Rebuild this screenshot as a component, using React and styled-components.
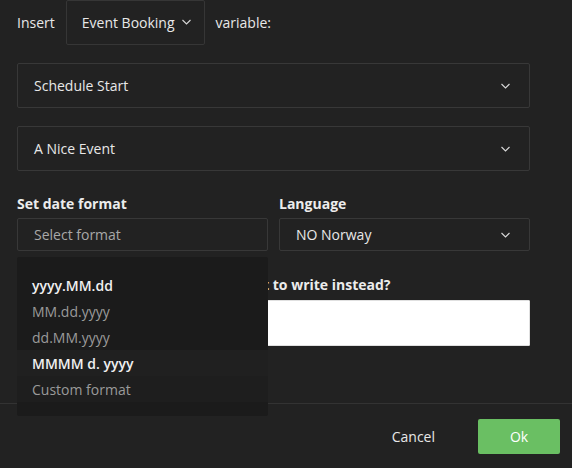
import React from "react";
import styled, { createGlobalStyle } from "styled-components";

const GlobalStyle = createGlobalStyle`
  html, body {
    margin: 0;
    padding: 0;
    background: #222222;
  }
  body {
    font-family: "Open Sans", "Noto Sans", sans-serif;
    color: #e8e8e8;
  }
`;

const Dialog = styled.div`
  width: 572px;
  height: 468px;
  display: flex;
  flex-direction: column;
  background: #222222;
  overflow: hidden;
`;

const Body = styled.div`
  flex: 1;
  padding: 0 42px 0 17px;
  display: flex;
  flex-direction: column;
`;

const InsertRow = styled.div`
  display: flex;
  align-items: center;
  height: 45px;
  font-size: 14px;
  gap: 11px;
`;

const InlineButton = styled.div`
  height: 45px;
  box-sizing: border-box;
  margin-top: -1px;
  border: 1px solid #363636;
  border-radius: 2px;
  padding: 0 13px 0 15px;
  display: flex;
  align-items: center;
  gap: 7px;
  font-size: 14px;
  color: #e8e8e8;
`;

const Select = styled.div`
  box-sizing: border-box;
  height: ${p => p.$h || 45}px;
  margin-top: ${p => p.$mt || 0}px;
  border: 1px solid #383838;
  border-radius: 2px;
  padding: 0 19px 0 16px;
  display: flex;
  align-items: center;
  justify-content: space-between;
  font-size: 14px;
  color: ${p => (p.$placeholder ? "#a8a8a8" : "#e8e8e8")};
`;

const Columns = styled.div`
  display: grid;
  grid-template-columns: 251px 251px;
  column-gap: 11px;
  margin-top: 23px;
`;

const Field = styled.div`
  position: relative;
  display: flex;
  flex-direction: column;
`;

const Label = styled.div`
  font-size: 14px;
  font-weight: 700;
  line-height: 20px;
  margin-bottom: ${p => p.$mb || 4}px;
  color: #ececec;
  white-space: nowrap;
`;

const TextInput = styled.div`
  height: 46px;
  box-sizing: border-box;
  background: #ffffff;
  border: 1px solid #e0e0e0;
  border-radius: 1px;
`;

const Wide = styled.div`
  margin-top: 24px;
  display: flex;
  flex-direction: column;
`;

const Menu = styled.div`
  position: absolute;
  top: calc(100% + 6px);
  left: 0;
  width: 251px;
  height: 159px;
  background: #1b1b1b;
  border-radius: 2px;
  padding-top: 15px;
  box-sizing: border-box;
  z-index: 5;
`;

const MenuItem = styled.div`
  height: 26px;
  display: flex;
  align-items: center;
  padding-left: 15px;
  font-size: 14px;
  font-weight: ${p => (p.$bold ? 600 : 400)};
  color: ${p => (p.$bold ? "#f0f0f0" : "#9a9a9a")};
  background: ${p => p.$bg || "transparent"};
`;

const Footer = styled.div`
  height: 64px;
  border-top: 1px solid #333333;
  display: flex;
  align-items: center;
  justify-content: flex-end;
  padding: 0 12px 0 0;
  gap: 43px;
`;

const CancelButton = styled.div`
  font-size: 14px;
  color: #e8e8e8;
`;

const OkButton = styled.div`
  width: 82px;
  height: 35px;
  background: #6abf63;
  border-radius: 2px;
  display: flex;
  align-items: center;
  justify-content: center;
  font-size: 14px;
  color: #ffffff;
`;

const Chevron = () => (
  <svg width="9" height="6" viewBox="0 0 9 6" fill="none">
    <polyline points="0.5,1 4.5,5 8.5,1" stroke="#d8d8d8" strokeWidth="1.1" />
  </svg>
);

const formats = [
  { label: "yyyy.MM.dd", bold: true },
  { label: "MM.dd.yyyy" },
  { label: "dd.MM.yyyy" },
  { label: "MMMM d. yyyy", bold: true, bg: "#202020" },
  { label: "Custom format", bg: "#1e1e1e" },
];

export default function App() {
  return (
    <Dialog>
      <GlobalStyle />
      <Body>
        <InsertRow>
          <span>Insert</span>
          <InlineButton>
            Event Booking <Chevron />
          </InlineButton>
          <span>variable:</span>
        </InsertRow>
        <Select $mt={18}>
          <span>Schedule Start</span>
          <Chevron />
        </Select>
        <Select $mt={18}>
          <span>A Nice Event</span>
          <Chevron />
        </Select>
        <Columns>
          <Field>
            <Label>Set date format</Label>
            <Select $h={33} $placeholder>
              <span>Select format</span>
            </Select>
            <Menu>
              {formats.map(f => (
                <MenuItem key={f.label} $bold={f.bold} $bg={f.bg}>
                  {f.label}
                </MenuItem>
              ))}
            </Menu>
          </Field>
          <Field>
            <Label>Language</Label>
            <Select $h={33}>
              <span>NO Norway</span>
              <Chevron />
            </Select>
          </Field>
        </Columns>
        <Wide>
          <Label $mb={5}>If no date exists for this event, what to write instead?</Label>
          <TextInput />
        </Wide>
      </Body>
      <Footer>
        <CancelButton>Cancel</CancelButton>
        <OkButton>Ok</OkButton>
      </Footer>
    </Dialog>
  );
}
